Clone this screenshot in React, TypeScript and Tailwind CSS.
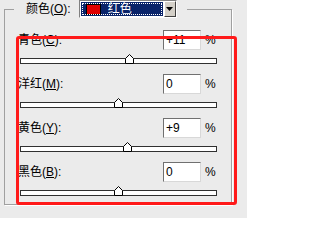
import React from "react";

const rows = [
  { label: "青色", key: "C", value: "+11", v: 11 },
  { label: "洋红", key: "M", value: "0", v: 0 },
  { label: "黄色", key: "Y", value: "+9", v: 9 },
  { label: "黑色", key: "B", value: "0", v: 0 },
];

function Thumb() {
  return (
    <svg width="9" height="10" viewBox="0 0 9 10" className="block">
      <path d="M4.5 0.5 L8.5 4.5 L8.5 9.5 L0.5 9.5 L0.5 4.5 Z" fill="#ffffff" stroke="#000000" strokeWidth="1" />
    </svg>
  );
}

function Row({ label, k, value, v }: { label: string; k: string; value: string; v: number }) {
  const center = 98.5 * (1 + v / 100);
  return (
    <div className="h-[44px]">
      <div className="flex h-[20px] items-center">
        <div className="flex-1 text-[12px] leading-none text-black">
          {label}(<span className="underline">{k}</span>):
        </div>
        <div className="flex h-[20px] w-[38px] items-center border border-t-[#707070] border-l-[#707070] border-r-[#d8d8d8] border-b-[#d8d8d8] bg-white pl-[2px] text-[12px] leading-none text-black">
          {value}
        </div>
        <div className="ml-[4px] w-[14px] text-[12px] leading-none text-black">%</div>
      </div>
      <div className="relative ml-[2px] mt-[8px] h-[6px] w-[197px] border border-[#303030] bg-white">
        <div className="absolute top-[-5px]" style={{ left: `${center - 5.5}px` }}>
          <Thumb />
        </div>
      </div>
    </div>
  );
}

export default function App() {
  return (
    <div
      className="relative h-[218px] w-[247px] overflow-hidden bg-[#ebebeb]"
      style={{ fontFamily: '"Liberation Sans", "Noto Sans CJK SC", sans-serif' }}
    >
      <fieldset className="ml-[4px] h-[205px] w-[228px] border border-[#a0a0a0] pl-[13px] pr-[12px] shadow-[1px_1px_0_#ffffff]">
        <legend className="-ml-[4px] flex items-center pl-[12px] pr-[10px]">
          <span className="mr-[8px] text-[12px] leading-none text-black">
            颜色(<span className="underline">O</span>):
          </span>
          <div className="flex h-[18px] w-[98px] border border-t-[#808080] border-l-[#808080] border-r-[#ffffff] border-b-[#ffffff] bg-white">
            <div className="m-[1px] flex flex-1 items-center bg-[#0a246a] pl-[5px] outline-1 outline-dotted outline-offset-[-2px] outline-white">
              <div className="h-[11px] w-[15px] border border-[#000000] bg-[#e00000]" />
              <span className="ml-[7px] text-[12px] leading-none text-white">红色</span>
            </div>
            <div className="flex w-[12px] items-center justify-center border border-t-[#ffffff] border-l-[#ffffff] border-r-[#404040] border-b-[#404040] bg-[#d4d0c8]">
              <svg width="7" height="4" viewBox="0 0 7 4">
                <path d="M0 0 H7 L3.5 4 Z" fill="#000" />
              </svg>
            </div>
          </div>
        </legend>
        <div className="mt-[12px]">
          {rows.map((r) => (
            <Row key={r.key} label={r.label} k={r.key} value={r.value} v={r.v} />
          ))}
        </div>
      </fieldset>
      <div className="pointer-events-none absolute left-[16px] top-[36px] h-[169px] w-[221px] rounded-[3px] border-[3px] border-[#ff1a1a]" />
    </div>
  );
}
